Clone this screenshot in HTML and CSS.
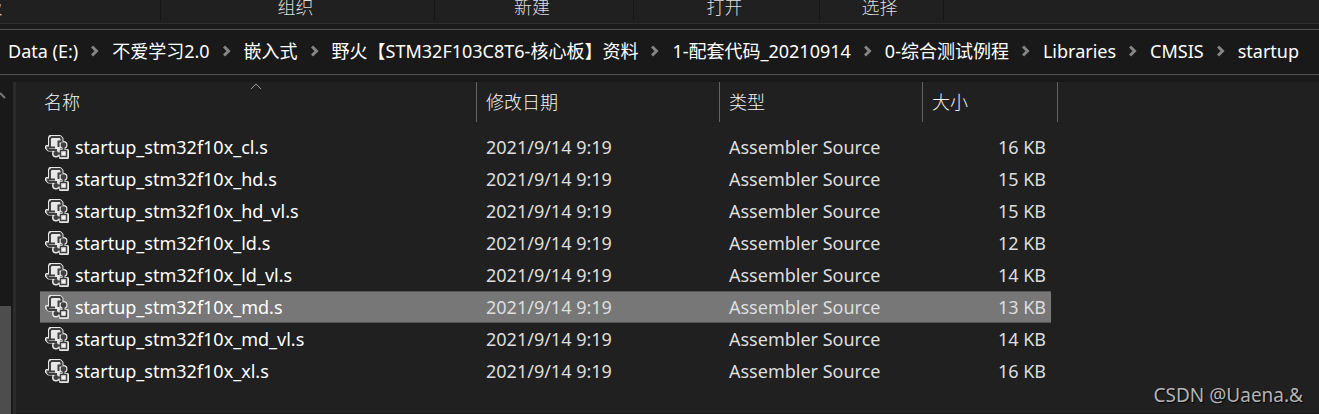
FILE: index.html
```html
<!DOCTYPE html>
<html lang="zh-CN">
<head>
    <meta charset="UTF-8">
    <title>startup</title>
    <link rel="stylesheet" href="styles.css">
</head>
<body>
    <svg class="sprite" aria-hidden="true">
        <symbol id="chevron" viewBox="0 0 8 12">
            <path d="M1 1.500L5.500 6L1 10.500" fill="none" stroke="#858585" stroke-width="3"/>
        </symbol>
        <symbol id="script-icon" viewBox="0 0 24 24">
            <g fill="#e8e8e8" stroke="#e8e8e8" stroke-width="3" stroke-linejoin="round">
                <path d="M5 1.500H15L17 3.500V7H14V15H3.500L1.500 13V11.500H4.500V3Z"/>
                <circle cx="18.500" cy="10" r="2.500"/>
                <path d="M18.500 10V16M11 18.500H16"/>
                <circle cx="11" cy="18.500" r="2.500"/>
                <path d="M15.500 15.500H22.500V22.500H15.500Z"/>
            </g>
            <g fill="none" stroke="#404040" stroke-width="2">
                <path d="M5 12V3.500L6.500 2H15L16.500 3.500V6.500H13.500V12"/>
                <path d="M1.500 12.500H10M2.500 13.500L4 15H12"/>
                <path d="M18.500 10V15M11 18.500H15"/>
                <path d="M15.500 15.500H21.500V21.500H15.500Z" fill="#f0f0f0" stroke-width="1.500"/>
            </g>
            <circle cx="18.500" cy="10" r="2.800" fill="#404040"/>
            <circle cx="11" cy="18.500" r="2.500" fill="#404040"/>
        </symbol>
    </svg>

    <div class="ribbon">
        <div class="group clipboard">剪贴板</div>
        <div class="group organize">组织</div>
        <div class="group new">新建</div>
        <div class="group open">打开</div>
        <div class="group select">选择</div>
    </div>

    <nav class="address-bar" aria-label="地址">
        <a href="#">Data (E:)</a>
        <svg class="chevron"><use href="#chevron"/></svg>
        <a href="#">不爱学习2.0</a>
        <svg class="chevron"><use href="#chevron"/></svg>
        <a href="#">嵌入式</a>
        <svg class="chevron"><use href="#chevron"/></svg>
        <a href="#">野火【STM32F103C8T6-核心板】资料</a>
        <svg class="chevron"><use href="#chevron"/></svg>
        <a href="#">1-配套代码_20210914</a>
        <svg class="chevron"><use href="#chevron"/></svg>
        <a href="#">0-综合测试例程</a>
        <svg class="chevron"><use href="#chevron"/></svg>
        <a href="#">Libraries</a>
        <svg class="chevron"><use href="#chevron"/></svg>
        <a href="#">CMSIS</a>
        <svg class="chevron"><use href="#chevron"/></svg>
        <a href="#">startup</a>
    </nav>

    <div class="content">
        <aside class="sidebar">
            <svg class="scroll-up" viewBox="0 0 6 12"><path d="M0 3L5 8" fill="none" stroke="#777" stroke-width="2"/></svg>
            <div class="scroll-thumb"></div>
        </aside>
        <main class="files">
            <table>
                <thead>
                    <tr>
                        <th class="name">名称
                            <svg class="sort" viewBox="0 0 12 7"><path d="M1 6L6 1L11 6" fill="none" stroke="#999"/></svg>
                        </th>
                        <th class="date">修改日期</th>
                        <th class="type">类型</th>
                        <th class="size">大小</th>
                    </tr>
                </thead>
                <tbody></tbody>
            </table>
            <div class="watermark">CSDN @Uaena.&amp;</div>
        </main>
    </div>

    <script src="script.js"></script>
</body>
</html>
```

FILE: styles.css
```css
* {
    margin: 0;
    padding: 0;
    box-sizing: border-box;
}

body {
    display: flex;
    flex-direction: column;
    min-height: 100vh;
    overflow: hidden;
    background-color: #191919;
    color: #fff;
    font-family: "Noto Sans", "Noto Sans CJK SC", sans-serif;
    font-size: 18px;
    line-height: 24px;
}

.sprite {
    display: none;
}

/* Ribbon */
.ribbon {
    display: flex;
    height: 24px;
    padding-bottom: 3px;
    background-color: #202020;
    border-bottom: 1px solid #2d2d2d;
    color: #dedede;
    font-weight: 300;
}

.group {
    flex: none;
    height: 20px;
    padding-right: 4px;
    border-right: 1px solid #161616;
    line-height: 15px;
    text-align: center;
}

.clipboard {
    width: 366px;
    margin-left: -205px;
}

.organize {
    width: 274px;
}

.new {
    width: 199px;
}

.open {
    width: 186px;
}

.select {
    width: 124px;
}

/* Address bar */
.address-bar {
    display: flex;
    align-items: center;
    gap: 13px;
    height: 46px;
    margin: 5px 0 7px;
    padding: 0 8px 2px;
    border-top: 1px solid #535353;
    border-bottom: 1px solid #535353;
    white-space: nowrap;
}

.address-bar a {
    color: #fff;
    text-decoration: none;
}

.chevron {
    flex: none;
    width: 8px;
    height: 12px;
}

/* File list */
.content {
    display: flex;
    flex: 1;
}

.sidebar {
    display: flex;
    flex-direction: column;
    justify-content: space-between;
    width: 16px;
    padding-top: 8px;
    border-right: 3px solid #2b2b2b;
}

.scroll-up {
    width: 6px;
    height: 12px;
}

.scroll-thumb {
    width: 11px;
    height: 108px;
    background-color: #4d4d4d;
}

.files {
    position: relative;
    flex: 1;
    padding-left: 24px;
    background-color: #202020;
    border-bottom: 1px solid #191919;
}

table {
    width: 1018px;
    border-spacing: 0;
    table-layout: fixed;
}

th {
    height: 40px;
    border-right: 1px solid #636363;
    color: #f5f5f5;
    font-weight: 300;
    text-align: left;
}

th.name {
    position: relative;
    width: 437px;
    padding-left: 4px;
}

th.date {
    width: 243px;
}

th.type {
    width: 203px;
}

th.date,
th.type,
th.size,
td {
    padding-left: 9px;
}

.sort {
    position: absolute;
    top: 1px;
    left: 210px;
    width: 12px;
    height: 7px;
}

tbody::before {
    content: "";
    display: block;
    height: 9px;
}

td {
    height: 32px;
    color: #dedede;
}

td.name {
    padding-left: 5px;
    color: #fff;
}

.file {
    display: flex;
    align-items: center;
    gap: 6px;
    color: inherit;
    text-decoration: none;
}

.file svg {
    width: 24px;
    height: 24px;
}

td.size {
    padding-right: 5px;
    border-right: 7px solid #202020;
    text-align: right;
}

.selected td {
    background-color: #777;
    box-shadow: inset 0 1px #555, inset 0 -1px #555;
}

/* Lies over the file list */
.watermark {
    position: absolute;
    right: 16px;
    bottom: 6px;
    color: #b4b4b4;
    font-size: 19px;
    text-shadow: 1px 1px 1px #000;
}
```

FILE: script.js
```js
const files = [
    { name: "startup_stm32f10x_cl.s", size: 16 },
    { name: "startup_stm32f10x_hd.s", size: 15 },
    { name: "startup_stm32f10x_hd_vl.s", size: 15 },
    { name: "startup_stm32f10x_ld.s", size: 12 },
    { name: "startup_stm32f10x_ld_vl.s", size: 14 },
    { name: "startup_stm32f10x_md.s", size: 13, selected: true },
    { name: "startup_stm32f10x_md_vl.s", size: 14 },
    { name: "startup_stm32f10x_xl.s", size: 16 }
];

const tbody = document.querySelector('tbody');

files.forEach(file => {
    const row = document.createElement('tr');
    if (file.selected) {
        row.classList.add('selected');
    }

    row.innerHTML = `
        <td class="name"><a class="file" href="#"><svg><use href="#script-icon"/></svg>${file.name}</a></td>
        <td>2021/9/14 9:19</td>
        <td>Assembler Source</td>
        <td class="size">${file.size} KB</td>
    `;

    tbody.appendChild(row);
});
```
